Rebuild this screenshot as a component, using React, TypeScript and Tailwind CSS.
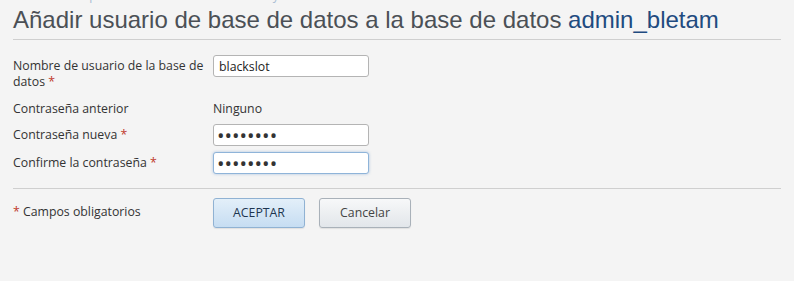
import { useState } from 'react';

export default function App() {
  const [password, setPassword] = useState('12345678');
  const [confirm, setConfirm] = useState('12345678');

  const labelFont = { fontFamily: '"Open Sans", "Liberation Sans", sans-serif' };

  return (
    <div className="w-[794px] h-[281px] overflow-hidden bg-[#f4f4f4] text-[12.3px] text-[#333]" style={labelFont}>
      <div className="px-[13px]">
        {/* Breadcrumb (cut off above) */}
        <div className="h-[3px] overflow-hidden">
          <div className="-mt-[11px] text-[12px] leading-[14px] text-[#a9bdd3] whitespace-nowrap">
            Inicio &gt; Suscripciones &gt; bletam.es &gt; Sitios web y dominios &gt; Bases de datos
          </div>
        </div>

        {/* Title */}
        <h1
          className="h-[37px] border-b border-[#cfcfcf] pt-[3px] text-[24px] leading-[28px] text-[#4b5056] whitespace-nowrap"
          style={{ fontFamily: '"Liberation Sans", Arial, sans-serif' }}
        >
          Añadir usuario de base de datos a la base de datos <span className="text-[#1f4b80]">admin_bletam</span>
        </h1>

        {/* Form */}
        <div className="pt-[15px]">
          <div className="grid grid-cols-[200px_1fr]">
            <label className="pt-[3px] leading-[16px] pr-2">
              Nombre de usuario de la base de datos <span className="text-[#c0392b]">*</span>
            </label>
            <div>
              <input
                defaultValue="blackslot"
                className="block w-[156px] h-[22px] rounded-[3px] border border-[#b4b4b4] bg-white px-[5px] text-[12.3px] text-[#222] outline-none"
              />
            </div>
          </div>

          <div className="grid grid-cols-[200px_1fr] mt-[11px] leading-[16px]">
            <div>Contraseña anterior</div>
            <div>Ninguno</div>
          </div>

          <div className="grid grid-cols-[200px_1fr] mt-[7px] items-center">
            <label className="leading-[16px]">
              Contraseña nueva <span className="text-[#c0392b]">*</span>
            </label>
            <div>
              <input
                type="password"
                value={password}
                onChange={(e) => setPassword(e.target.value)}
                className="block w-[156px] h-[22px] rounded-[3px] border border-[#b4b4b4] bg-white px-[3px] text-[20px] leading-[20px] text-[#333] outline-none"
              />
            </div>
          </div>

          <div className="grid grid-cols-[200px_1fr] mt-[6px] items-center">
            <label className="leading-[16px]">
              Confirme la contraseña <span className="text-[#c0392b]">*</span>
            </label>
            <div>
              <input
                type="password"
                value={confirm}
                onChange={(e) => setConfirm(e.target.value)}
                className="block w-[156px] h-[22px] rounded-[3px] border border-[#8fb4d9] bg-white px-[3px] text-[20px] leading-[20px] text-[#333] outline-none shadow-[0_0_3px_rgba(120,160,210,0.6)]"
              />
            </div>
          </div>
        </div>

        <div className="mt-[14px] border-t border-[#cfcfcf]" />

        {/* Actions */}
        <div className="grid grid-cols-[200px_1fr] pt-[9px]">
          <div className="pt-[6px] leading-[16px]">
            <span className="text-[#c0392b]">*</span> Campos obligatorios
          </div>
          <div className="flex gap-[14px]">
            <button className="w-[92px] h-[30px] rounded-[3px] border border-[#90b2d3] bg-gradient-to-b from-[#e3eff9] to-[#c6ddf2] text-[12.3px] text-[#1d3550] shadow-[0_1px_1px_rgba(0,0,0,0.08)]">
              ACEPTAR
            </button>
            <button className="w-[92px] h-[30px] rounded-[3px] border border-[#a9b1b9] bg-gradient-to-b from-[#f7f8f9] to-[#e2e6ea] text-[12.3px] text-[#444] shadow-[0_1px_1px_rgba(0,0,0,0.08)]">
              Cancelar
            </button>
          </div>
        </div>
      </div>
    </div>
  );
}
